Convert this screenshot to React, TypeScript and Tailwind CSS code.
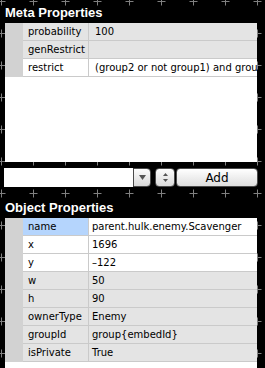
type Row = { k: string; v: string; bg: "gray" | "white"; sel?: boolean };

const metaRows: Row[] = [
  { k: "probability", v: "100", bg: "gray" },
  { k: "genRestrict", v: "", bg: "gray" },
  { k: "restrict", v: "(group2 or not group1) and group3", bg: "white" },
];

const objectRows: Row[] = [
  { k: "name", v: "parent.hulk.enemy.Scavenger", bg: "white", sel: true },
  { k: "x", v: "1696", bg: "white" },
  { k: "y", v: "–122", bg: "white" },
  { k: "w", v: "50", bg: "gray" },
  { k: "h", v: "90", bg: "gray" },
  { k: "ownerType", v: "Enemy", bg: "gray" },
  { k: "groupId", v: "group{embedId}", bg: "gray" },
  { k: "isPrivate", v: "True", bg: "gray" },
];

const PropRow = ({ row, valuePad }: { row: Row; valuePad: string }) => {
  const bg = row.bg === "gray" ? "bg-[#e4e4e4]" : "bg-white";
  return (
    <div className="flex h-[18px]">
      <div className="w-[18px] shrink-0 bg-[#d2d2d2]" />
      <div
        className={`flex w-[66px] shrink-0 items-center border-r border-b border-[#cacaca] pl-[5px] ${
          row.sel ? "bg-[#b5d5fd]" : bg
        }`}
      >
        {row.k}
      </div>
      <div
        className={`flex min-w-0 flex-1 items-center overflow-hidden whitespace-nowrap border-b border-[#cacaca] ${valuePad} ${bg}`}
      >
        {row.v}
      </div>
    </div>
  );
};

const Header = ({ title, className }: { title: string; className: string }) => (
  <h2
    className={`pl-[5px] font-['Liberation_Sans',sans-serif] text-[13px] leading-[16px] font-bold text-white ${className}`}
  >
    {title}
  </h2>
);

export default function App() {
  return (
    <div className="relative h-[368px] w-[265px] overflow-hidden bg-black font-['DejaVu_Sans',sans-serif] text-[10px] text-black">
      {/* canvas grid crosses */}
      <svg className="absolute inset-0" width="265" height="368">
        <defs>
          <pattern id="grid" width="32" height="32" patternUnits="userSpaceOnUse" x="-15" y="-15">
            <path d="M16.5 12.5v8M12.5 16.5h8" stroke="#808080" strokeWidth="1" />
          </pattern>
        </defs>
        <rect width="265" height="368" fill="url(#grid)" />
      </svg>

      <div className="relative flex h-full flex-col">
        <Header title="Meta Properties" className="h-[23px] pt-[5px]" />
        <div className="ml-[5px] h-[139px] w-[252px] bg-white">
          {metaRows.map((r) => (
            <PropRow key={r.k} row={r} valuePad="pl-[6px]" />
          ))}
        </div>

        <div className="mt-[6px] ml-[4px] flex h-[19px] w-[254px]">
          <div className="w-[129px] bg-white" />
          <div className="flex w-[18px] items-center justify-center rounded-r-[4px] border border-[#4a4a4a] bg-linear-to-b from-[#fdfdfd] to-[#d9d9d9]">
            <svg width="7" height="5" viewBox="0 0 7 5">
              <path d="M0 0h7L3.5 5z" fill="#555" />
            </svg>
          </div>
          <div className="ml-[4px] flex w-[20px] flex-col items-center justify-center gap-[3px] rounded-[4px] border border-[#4a4a4a] bg-linear-to-b from-[#fdfdfd] to-[#d9d9d9]">
            <svg width="5" height="3" viewBox="0 0 5 3">
              <path d="M2.5 0L5 3H0z" fill="#555" />
            </svg>
            <svg width="5" height="3" viewBox="0 0 5 3">
              <path d="M0 0h5L2.5 3z" fill="#555" />
            </svg>
          </div>
          <button className="ml-[1px] flex flex-1 items-center justify-center rounded-[4px] border border-[#4a4a4a] bg-linear-to-b from-white to-[#dedede] text-[12px] leading-none text-black">
            Add
          </button>
        </div>

        <Header title="Object Properties" className="h-[31px] pt-[13px]" />
        <div className="ml-[5px] w-[252px] flex-1 bg-white">
          {objectRows.map((r) => (
            <PropRow key={r.k} row={r} valuePad="pl-[3px]" />
          ))}
        </div>
      </div>
    </div>
  );
}
